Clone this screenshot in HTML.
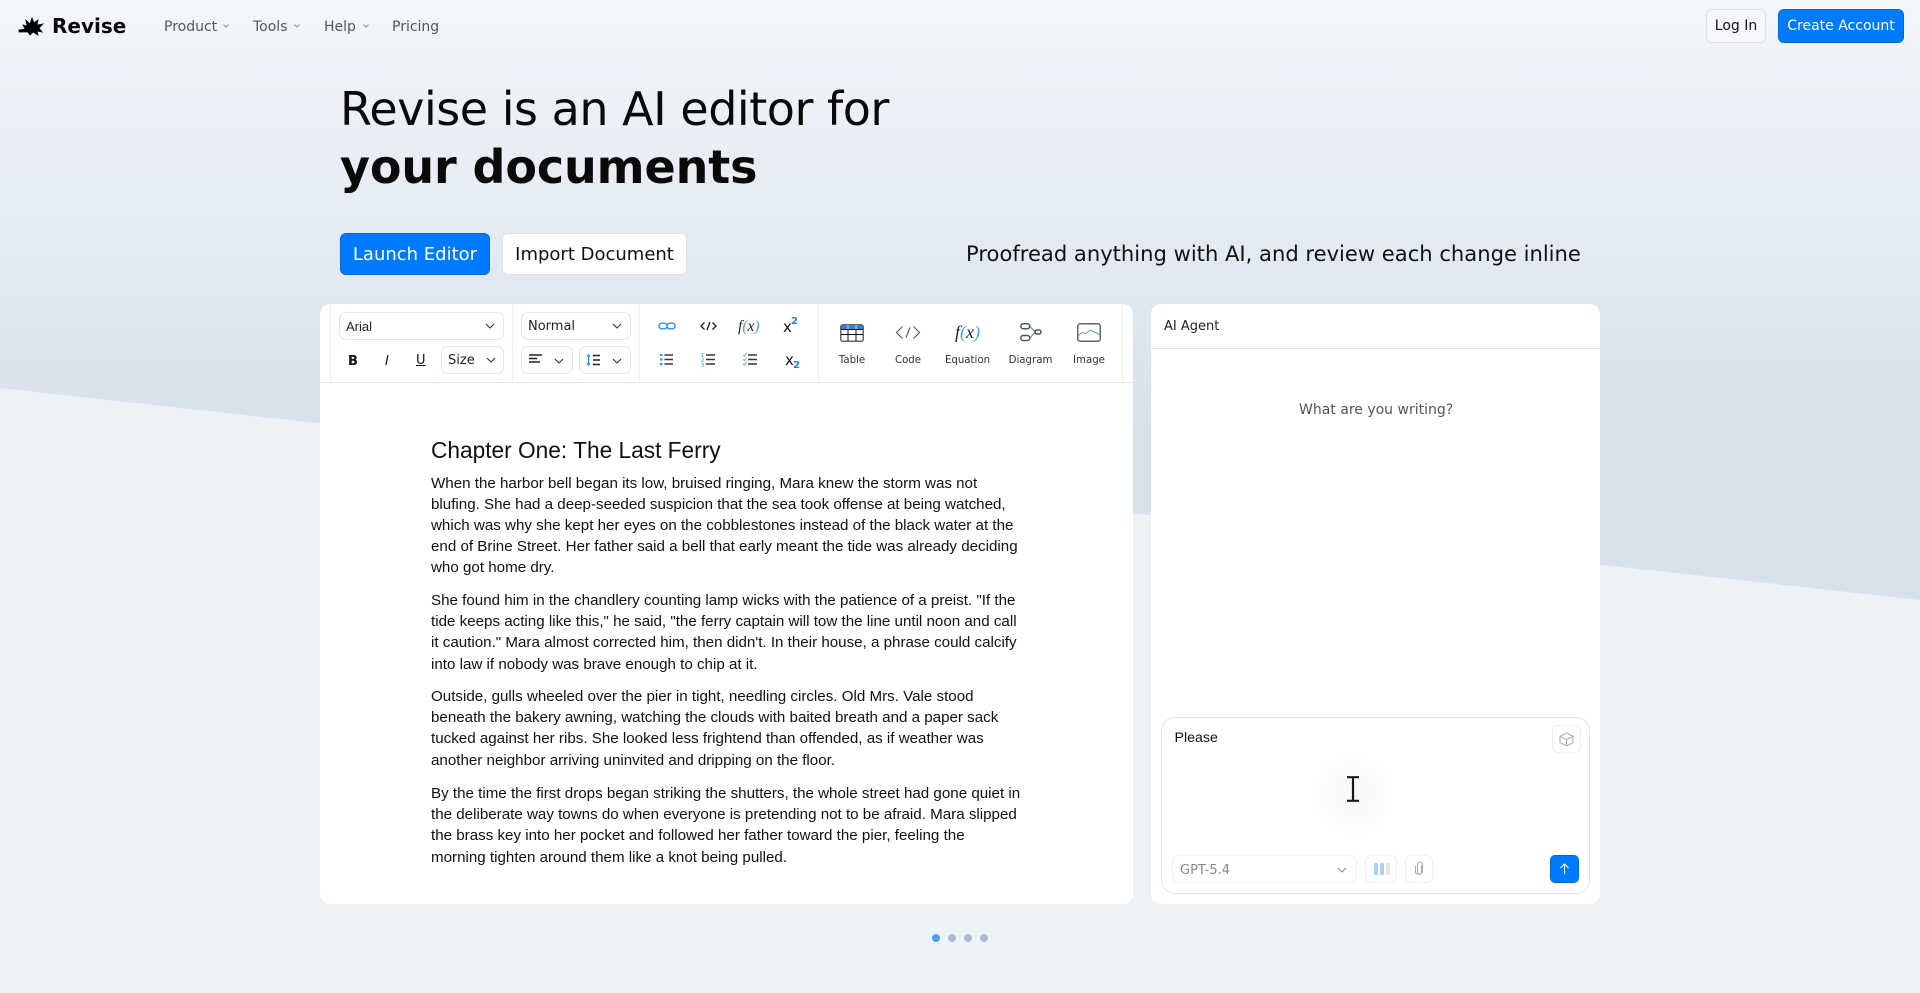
<!DOCTYPE html>
<html lang="en"><head><meta charset="utf-8"><title>Revise</title>
<style>
*{box-sizing:border-box;margin:0;padding:0}
html,body{width:1920px;height:993px;overflow:hidden;background:#edf2f7}
body{position:relative;font-family:"DejaVu Sans",sans-serif;color:#111}
.abs,.t{position:absolute}
.t{white-space:nowrap;line-height:1}
#bg{position:absolute;left:0;top:0;width:1920px;height:993px;background:linear-gradient(180deg,#f3f6fa 0,#d7e1ec 430px,#d7e1ec 100%);clip-path:polygon(0 0,1920px 0,1920px 600px,0 388px)}
.nav{font-size:14px;color:#555;top:20px}
.btn{position:absolute;border-radius:6px;display:flex;align-items:center;justify-content:center;white-space:nowrap}
.card{position:absolute;background:#fff;border-radius:10px}
.sel{position:absolute;height:28px;border:1px solid #e2e6ec;border-radius:7px;background:#fff;font-size:13px;color:#222;display:flex;align-items:center;padding:1px 0 0 6px}
.chev{position:absolute;right:8px;top:10px}
.v{position:absolute;width:1px;top:304px;height:78px;background:#eef0f4}
.lb{font-size:10.2px;color:#333;top:356px;transform:translateX(-50%)}
.doc{font-family:"Liberation Sans",Arial,sans-serif;font-size:15.15px;line-height:21.2px;color:#111;left:431px;white-space:nowrap}
svg{position:absolute;overflow:visible}
.dot{position:absolute;width:8px;height:8px;border-radius:50%;top:934px;background:#a8bdd4}
</style></head><body>
<div id="bg"></div>

<svg style="left:18px;top:16px" width="26" height="20" viewBox="0 0 26 20"><path d="M1 14 7 13 5 9 9 10 8 4 12 8 14 2 16 7 20 4 19 9 25 8 21 12 24 16 19 15 20 19 15 16 12 19 10 16H1Z" fill="#000" stroke="#000" stroke-width=".8"/></svg>
<div class="t" style="left:52px;top:15.500px;font-size:20px;font-weight:700;color:#0a0a0a">Revise</div>
<div class="t nav" style="left:164px">Product</div>
<svg style="left:223px;top:24px" width="6" height="4"><path d="M.5.6 3 3 5.500.6" fill="none" stroke="#888" stroke-width="1"/></svg>
<div class="t nav" style="left:253px">Tools</div>
<svg style="left:294px;top:24px" width="6" height="4"><path d="M.5.6 3 3 5.500.6" fill="none" stroke="#888" stroke-width="1"/></svg>
<div class="t nav" style="left:324px">Help</div>
<svg style="left:363px;top:24px" width="6" height="4"><path d="M.5.6 3 3 5.500.6" fill="none" stroke="#888" stroke-width="1"/></svg>
<div class="t nav" style="left:392px">Pricing</div>
<div class="btn" style="left:1706px;top:9px;width:60px;height:34px;border:1px solid #dfe3e8;background:#f5f7fa;font-size:14px;color:#111">Log In</div>
<div class="btn" style="left:1778px;top:9px;width:126px;height:34px;background:#007bff;border:1px solid #0069d9;font-size:14px;color:#fff">Create Account</div>

<div class="t" style="left:340px;top:80px;font-size:46px;line-height:58px;color:#0a0a0a;letter-spacing:-.48px">Revise is an AI editor for<br><b style="letter-spacing:-.1px">your documents</b></div>
<div class="btn" style="left:340px;top:233px;width:150px;height:42px;background:#007bff;border:1px solid #0069d9;font-size:18px;color:#fff">Launch Editor</div>
<div class="btn" style="left:502px;top:233px;width:185px;height:42px;background:#fff;border:1px solid #dfe3e8;font-size:18px;color:#111">Import Document</div>
<div class="t" style="left:966px;top:243px;font-size:21.080px;color:#111">Proofread anything with AI, and review each change inline</div>

<div class="card" style="left:320px;top:304px;width:813px;height:600px"></div>
<div class="abs" style="left:320px;top:382px;width:813px;height:1px;background:#e2e5ec"></div>
<div class="v" style="left:330px"></div><div class="v" style="left:512px"></div><div class="v" style="left:639px"></div><div class="v" style="left:818px"></div><div class="v" style="left:1122px"></div>

<div class="sel" style="left:339px;top:312px;width:165px;font-family:'Liberation Sans',sans-serif">Arial<svg class="chev" width="10" height="7"><path d="M1 1 5 5 9 1" fill="none" stroke="#333" stroke-width="1.1"/></svg></div>
<div class="sel" style="left:521px;top:312px;width:110px">Normal<svg class="chev" width="10" height="7"><path d="M1 1 5 5 9 1" fill="none" stroke="#333" stroke-width="1.1"/></svg></div>
<div class="t" style="left:348px;top:354px;font:700 13px 'DejaVu Sans',sans-serif">B</div>
<div class="t" style="left:385px;top:354px;font:italic 13px 'DejaVu Sans',sans-serif">I</div>
<div class="t" style="left:416px;top:354px;font-size:13px;text-decoration:underline">U</div>
<div class="sel" style="left:441px;top:346px;width:63px">Size<svg class="chev" style="right:7px" width="10" height="7"><path d="M1 1 5 5 9 1" fill="none" stroke="#333" stroke-width="1.1"/></svg></div>
<div class="sel" style="left:521px;top:346px;width:52px"><svg style="left:7px;top:7px" width="13" height="10"><path d="M0 1H13M0 4.500H8M0 8H11" stroke="#222" stroke-width="1.5"/></svg><svg class="chev" style="right:8px;top:11px" width="10" height="7"><path d="M1 1 5 5 9 1" fill="none" stroke="#333" stroke-width="1.1"/></svg></div>
<div class="sel" style="left:579px;top:346px;width:52px"><svg style="left:6px;top:7px" width="14" height="12"><path d="M2.500 1V11M1 2.500 2.500 1 4 2.500M1 9.500 2.500 11 4 9.500" fill="none" stroke="#2b8cff" stroke-width="1.3"/><path d="M7 1.500H14M7 6H14M7 10.500H14" stroke="#222" stroke-width="1.5"/></svg><svg class="chev" style="right:8px;top:11px" width="10" height="7"><path d="M1 1 5 5 9 1" fill="none" stroke="#333" stroke-width="1.1"/></svg></div>

<svg style="left:656.500px;top:320px" width="20" height="12"><g fill="none" stroke="#2b8cff" stroke-width="1.4"><rect x="2" y="3.200" width="8" height="5.600" rx="2.800"/><rect x="10" y="3.200" width="8" height="5.600" rx="2.800"/></g></svg>
<svg style="left:700px;top:320px" width="17" height="12"><path d="M4.500 2.500 1 6 4.500 9.500M12.500 2.500 16 6 12.500 9.500M10 2 7 10" fill="none" stroke="#222" stroke-width="1.4"/></svg>
<div class="t" style="left:738px;top:318px;font:italic 15.500px 'Liberation Serif',serif;color:#222">f<span style="color:#4a9cf0">(</span>x<span style="color:#4a9cf0">)</span></div>
<div class="t" style="left:783px;top:320px;font-size:15px;color:#111">x</div><div class="t" style="left:791px;top:317px;font-size:10px;font-weight:700;color:#1a7fff">2</div>
<svg style="left:660px;top:353px" width="14" height="13"><path d="M0 2H2.500M0 6.500H2.500M0 11H2.500" stroke="#2b8cff" stroke-width="2"/><path d="M4.500 2H13M4.500 6.500H13M4.500 11H13" stroke="#333" stroke-width="1.500"/></svg>
<svg style="left:701px;top:352px" width="14" height="15"><path d="M5 3H14M5 7.500H14M5 12H14" stroke="#333" stroke-width="1.500"/><text x="0" y="5" font-size="5" fill="#2b8cff">1</text><text x="0" y="10" font-size="5" fill="#2b8cff">2</text><text x="0" y="15" font-size="5" fill="#2b8cff">3</text></svg>
<svg style="left:743px;top:352px" width="14" height="15"><path d="M5 3H14M5 7.500H14M5 12H14" stroke="#333" stroke-width="1.500"/><path d="M0 3 1.500 4 3.500 1M0 7.500 1.500 8.500 3.500 5.500M0 12 1.500 13 3.500 10" fill="none" stroke="#5cbf6c" stroke-width="1"/></svg>
<div class="t" style="left:785px;top:353px;font-size:15px;color:#111">x</div><div class="t" style="left:793px;top:361px;font-size:10px;font-weight:700;color:#1a7fff">2</div>

<svg style="left:840px;top:324px" width="24" height="18"><rect x=".75" y=".75" width="22.500" height="16.500" rx="2" fill="#fff" stroke="#666" stroke-width="1.500"/><path d="M1 1H23V5H1Z" fill="#2f7fd8"/><path d="M1 5.500H23M1 10.500H23M8 5V17M16 5V17" stroke="#111" stroke-width="1"/><path d="M8 1V5M16 1V5" stroke="#cfe2f8" stroke-width="1"/></svg>
<svg style="left:895px;top:325px" width="26" height="15"><path d="M7.500 1.500 1.500 7.500 7.500 13.500M18.500 1.500 24.500 7.500 18.500 13.500M15 2.500 11 12.500" fill="none" stroke="#555" stroke-width="1.100"/></svg>
<div class="t" style="left:955px;top:322px;font:italic 18px 'Liberation Serif',serif;color:#222">f<span style="color:#4a9cf0">(</span>x<span style="color:#4a9cf0">)</span></div>
<svg style="left:1020px;top:323px" width="22" height="19"><path d="M10 3.500 15 9 10 15" fill="none" stroke="#3a94f0" stroke-width="1.200"/><g fill="#fff" stroke="#555" stroke-width="1.500"><rect x=".75" y=".75" width="9" height="5" rx="2.500"/><rect x=".75" y="12.500" width="9" height="5" rx="2.500"/><rect x="15" y="7" width="6" height="4" rx="2"/></g></svg>
<svg style="left:1077px;top:323px" width="24" height="19"><rect x=".75" y=".75" width="22.500" height="17.500" rx="2.500" fill="#fff" stroke="#666" stroke-width="1.500"/><path d="M1.500 12.500 5 9.500 9 10.500 13 7 17.500 9 22.500 11.500" fill="none" stroke="#55b866" stroke-width="1"/></svg>

<div class="t lb" style="left:852px">Table</div>
<div class="t lb" style="left:908px">Code</div>
<div class="t lb" style="left:967.500px">Equation</div>
<div class="t lb" style="left:1030.500px">Diagram</div>
<div class="t lb" style="left:1089px">Image</div>

<div class="t" style="left:431px;top:436.500px;font:22.700px 'Liberation Sans',sans-serif;color:#111">Chapter One: The Last Ferry</div>
<div class="abs doc" style="top:472.500px">When the harbor bell began its low, bruised ringing, Mara knew the storm was not<br>blufing. She had a deep-seeded suspicion that the sea took offense at being watched,<br>which was why she kept her eyes on the cobblestones instead of the black water at the<br>end of Brine Street. Her father said a bell that early meant the tide was already deciding<br>who got home dry.</div>
<div class="abs doc" style="top:590px">She found him in the chandlery counting lamp wicks with the patience of a preist. "If the<br>tide keeps acting like this," he said, "the ferry captain will tow the line until noon and call<br>it caution." Mara almost corrected him, then didn't. In their house, a phrase could calcify<br>into law if nobody was brave enough to chip at it.</div>
<div class="abs doc" style="top:686px">Outside, gulls wheeled over the pier in tight, needling circles. Old Mrs. Vale stood<br>beneath the bakery awning, watching the clouds with baited breath and a paper sack<br>tucked against her ribs. She looked less frightend than offended, as if weather was<br>another neighbor arriving uninvited and dripping on the floor.</div>
<div class="abs doc" style="top:783px">By the time the first drops began striking the shutters, the whole street had gone quiet in<br>the deliberate way towns do when everyone is pretending not to be afraid. Mara slipped<br>the brass key into her pocket and followed her father toward the pier, feeling the<br>morning tighten around them like a knot being pulled.</div>

<div class="card" style="left:1151px;top:304px;width:449px;height:600px"></div>
<div class="abs" style="left:1151px;top:348px;width:449px;height:1px;background:#e2e5ec"></div>
<div class="t" style="left:1164px;top:320px;font-size:13px;color:#222">AI Agent</div>
<div class="t" style="left:1299px;top:403px;font-size:14px;color:#555">What are you writing?</div>
<div class="abs" style="left:1161px;top:717px;width:429px;height:177px;border:1px solid #dfe3e8;border-radius:14px;background:#fff"></div>
<div class="t" style="left:1174.500px;top:729.500px;font:14.200px 'Liberation Sans',sans-serif;color:#111">Please</div>
<div class="abs" style="left:1313px;top:755px;width:80px;height:80px;border-radius:50%;background:radial-gradient(circle,#f8f8f8 0,#fcfcfc 50%,#fff 72%)"></div>
<svg style="left:1346px;top:776px" width="14" height="26"><path d="M1 1.200H13M1 24.800H13M7 1.200V24.800" fill="none" stroke="#1a1a1a" stroke-width="2.200"/></svg>
<div class="abs" style="left:1552px;top:725px;width:29px;height:28px;border:1px solid #eef0f3;border-radius:6px"></div>
<svg style="left:1559px;top:732px" width="15" height="15"><path d="M7.500 1 14 4.300V10.700L7.500 14 1 10.700V4.300ZM1 4.300 7.500 7.500 14 4.300M7.500 7.500V14" fill="none" stroke="#aaa" stroke-width="1"/></svg>
<div class="sel" style="left:1172px;top:855px;width:185px;border-color:#eef0f3;color:#888;padding:2px 0 0 7px">GPT-5.4<svg class="chev" width="10" height="7" style="top:11px;right:9px"><path d="M1 1 5 5 9 1" fill="none" stroke="#888" stroke-width="1"/></svg></div>
<div class="abs" style="left:1365px;top:855px;width:32px;height:28px;border:1px solid #eef0f3;border-radius:6px"></div>
<div class="abs" style="left:1374px;top:863px;width:4px;height:12px;background:#a8d0fb;border-radius:1px"></div>
<div class="abs" style="left:1380px;top:863px;width:4px;height:12px;background:#a8d0fb;border-radius:1px"></div>
<div class="abs" style="left:1386px;top:863px;width:4px;height:12px;background:#e6e9ee;border-radius:1px"></div>
<div class="abs" style="left:1405px;top:855px;width:28px;height:28px;border:1px solid #eef0f3;border-radius:6px"></div>
<svg style="left:1414px;top:861px" width="11" height="16"><path d="M7.500 4V11.500A2 2 0 0 1 3.500 11.500V3.500A2.500 2.500 0 0 1 8.500 3.500V11A4 4 0 0 1 1.500 11.500V5" fill="none" stroke="#aaa" stroke-width="1"/></svg>
<div class="abs" style="left:1550px;top:855px;width:29px;height:28px;background:#007bff;border:1px solid #0069d9;border-radius:5px"></div>
<svg style="left:1559px;top:863px" width="11" height="12"><path d="M5.500 11V1M1.500 5 5.500 1 9.500 5" fill="none" stroke="#fff" stroke-width="1"/></svg>

<div class="dot" style="left:932px;background:#4a9ff5"></div><div class="dot" style="left:948px"></div><div class="dot" style="left:964px"></div><div class="dot" style="left:980px"></div>
</body></html>
